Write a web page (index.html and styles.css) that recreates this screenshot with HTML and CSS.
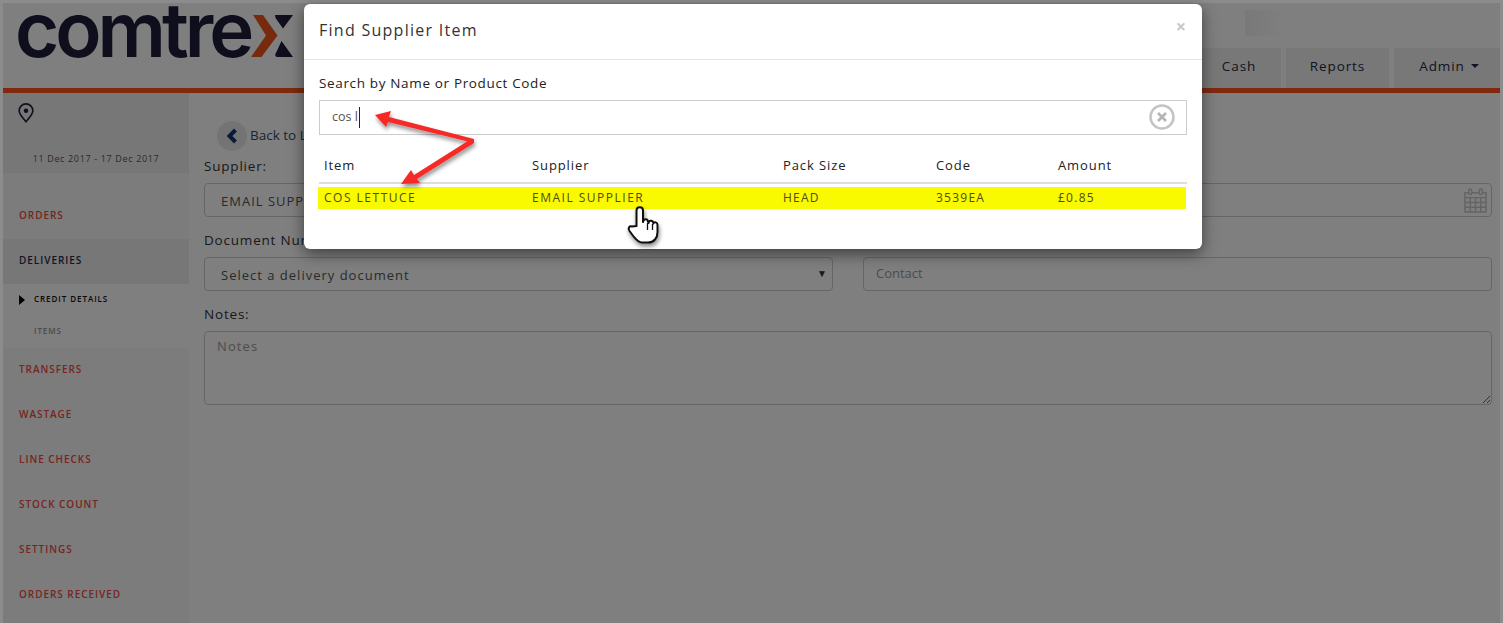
FILE: index.html
```html
<!DOCTYPE html>
<html lang="en">
<head>
<meta charset="utf-8">
<title>Find Supplier Item</title>
<link rel="stylesheet" href="styles.css">
</head>
<body>
<div class="frame">
  <header class="topbar">
    <div class="logo"><span class="logo-text">comtre</span><svg class="logo-x" viewBox="0 0 43 43" width="43" height="43"><path d="M2 0H12L26.500 20.500L10.500 42H0L15 20.500Z" fill="#f0541e"/><path d="M24 0H42L32 13.500L24.500 3ZM30.500 26L42 42H25.500L24 40Z" fill="#1e1c3a"/></svg></div>
    <div class="top-right">
      <div class="ghost"></div>
      <nav class="tabs">
        <a class="tab tab-cash">Cash</a>
        <a class="tab tab-reports">Reports</a>
        <a class="tab tab-admin">Admin <i class="caret"></i></a>
      </nav>
    </div>
  </header>
  <div class="layout">
    <aside class="sidebar">
      <div class="side-top">
        <svg class="pin" viewBox="0 0 18 22" width="18" height="20"><path d="M9 20.500C5 15.500 1.500 12.500 1.500 8.500A7.500 7.500 0 0 1 16.500 8.500C16.500 12.500 13 15.500 9 20.500Z" fill="none" stroke="#20203c" stroke-width="1.800"/><circle cx="9" cy="8.500" r="2.500" fill="#20203c"/></svg>
        <div class="dates">11 Dec 2017 - 17 Dec 2017</div>
      </div>
      <a class="side-link">ORDERS</a>
      <a class="side-link active">DELIVERIES</a>
      <div class="sub">
        <a class="sub-link current">CREDIT DETAILS</a>
        <a class="sub-link">ITEMS</a>
      </div>
      <a class="side-link">TRANSFERS</a>
      <a class="side-link">WASTAGE</a>
      <a class="side-link">LINE CHECKS</a>
      <a class="side-link">STOCK COUNT</a>
      <a class="side-link">SETTINGS</a>
      <a class="side-link">ORDERS RECEIVED</a>
    </aside>
    <main class="main">
      <div class="back"><span class="back-circle"><svg viewBox="0 0 14 16" width="14" height="16"><path d="M10.500 2L4.500 8L10.500 14" fill="none" stroke="#16376e" stroke-width="4"/></svg></span><span class="back-text">Back to List</span></div>
      <div class="grid">
        <div class="field">
          <label class="lbl">Supplier:</label>
          <div class="box value">EMAIL SUPPLIER</div>
        </div>
        <div class="field">
          <label class="lbl">&nbsp;</label>
          <div class="box date-box"><svg class="cal" viewBox="0 0 24 26" width="23" height="25"><g fill="none" stroke="#c8c8c8" stroke-width="1.500"><path d="M1 5H23V25H1ZM1 10H23M1 15H23M1 20H23M6.500 10V25M12 10V25M17.500 10V25"/><rect x="5" y="1" width="3" height="6" rx="1.500" fill="#fff"/><rect x="16" y="1" width="3" height="6" rx="1.500" fill="#fff"/></g></svg></div>
        </div>
        <div class="field">
          <label class="lbl">Document Number:</label>
          <div class="box value select-box"><span>Select a delivery document</span><span class="tri">▼</span></div>
        </div>
        <div class="field">
          <label class="lbl">&nbsp;</label>
          <input class="box contact" placeholder="Contact">
        </div>
      </div>
      <label class="lbl">Notes:</label>
      <textarea class="box notes" placeholder="Notes"></textarea>
    </main>
  </div>
</div>

<div class="overlay"></div>

<section class="modal">
  <div class="modal-head">
    <h4 class="modal-title">Find Supplier Item</h4>
    <span class="close">×</span>
  </div>
  <div class="modal-body">
    <label class="search-label">Search by Name or Product Code</label>
    <div class="search">
      <span class="search-text">cos l</span><i class="text-caret"></i>
      <svg class="clear" viewBox="0 0 26 26" width="26" height="26"><circle cx="13" cy="13" r="11.500" fill="none" stroke="#c4c4c4" stroke-width="2.500"/><path d="M9 9L17 17M17 9L9 17" stroke="#b4b4b4" stroke-width="2.600"/></svg>
    </div>
    <div class="row head-row">
      <span class="c1">Item</span><span class="c2">Supplier</span><span class="c3">Pack Size</span><span class="c4">Code</span><span class="c5">Amount</span>
    </div>
    <div class="row hit-row">
      <span class="c1">COS LETTUCE</span><span class="c2">EMAIL SUPPLIER</span><span class="c3">HEAD</span><span class="c4">3539EA</span><span class="c5">£0.85</span>
    </div>
  </div>
</section>

<svg class="annot" viewBox="0 0 1503 623" width="1503" height="623">
  <defs><filter id="sh" x="-20%" y="-20%" width="140%" height="150%"><feDropShadow dx="1" dy="3" stdDeviation="2" flood-color="#000" flood-opacity=".45"/></filter></defs>
  <g filter="url(#sh)">
    <path d="M375 115L391 111L389 117L474 139L474 143L388 122L386 127Z" fill="#f52a25"/>
    <path d="M401 184L411 170L414 175L471 139L474 143L417 179L420 183Z" fill="#f52a25"/>
  </g>
  <g filter="url(#sh)">
    <path d="M636.500 226L636.500 210.500C636.500 206 643 206 643 210.500L643 222C643.500 218.500 647.500 218.500 648 221.500L648.500 223C649 220 653 220 653.500 223.500C654 221.500 657.500 222 657.500 225L657.500 232C657.500 238 654 242.500 648 242.500L642 242.500C638.500 242.500 636.500 240 634 237L629.500 231C627.500 228 629.500 225.500 632 226.500Z" fill="#fff" stroke="#111" stroke-width="2" stroke-linejoin="round"/>
    <path d="M647.500 223V230M652.500 224V230" stroke="#111" stroke-width="1.300"/>
  </g>
</svg>
</body>
</html>
```

FILE: styles.css
```css
* { box-sizing: border-box; }
html, body { margin: 0; height: 100%; overflow: hidden; }
body {
  background: #8c8c8c;
  font-family: "Open Sans", sans-serif;
  color: #333;
  width: 1503px;
  height: 623px;
  position: relative;
}
.frame {
  width: 1503px;
  height: 623px;
  padding: 3px 3px 0 3px;
  display: flex;
  flex-direction: column;
  overflow: hidden;
}
.topbar {
  height: 90px;
  flex: none;
  display: flex;
  justify-content: space-between;
  background: #fff;
  border-bottom: 5px solid #fe541c;
  overflow: hidden;
}
.logo {
  display: flex;
  align-items: flex-start;
  padding-left: 12px;
  height: 85px;
}
.logo-text {
  font-family: Inter, sans-serif;
  font-weight: 600;
  font-size: 76px;
  line-height: 76px;
  letter-spacing: -4px;
  color: #1e1c3a;
  margin-top: -12px;
}
.logo-x { margin: 12px 0 0 1px; flex: none; }
.top-right { display: flex; flex-direction: column; align-items: flex-end; }
.ghost {
  width: 40px;
  height: 26px;
  margin: 7px 215px 12px 0;
  background: linear-gradient(90deg, #f2f2f2, #fff);
}
.tabs { display: flex; gap: 5px; height: 40px; }
.tab {
  display: flex;
  align-items: center;
  justify-content: center;
  background: #f0f0f0;
  color: #1e2a44;
  font-size: 13.500px;
  font-weight: 500;
  letter-spacing: .9px;
  padding-bottom: 4px;
}
.tab-cash { width: 84px; }
.tab-reports { width: 103px; }
.tab-admin { width: 106px; padding-left: 4px; }
.caret {
  width: 0;
  height: 0;
  margin-left: 6px;
  border-left: 4px solid transparent;
  border-right: 4px solid transparent;
  border-top: 4px solid #1e2a44;
}
.layout { display: flex; flex: 1; min-height: 0; }
.sidebar {
  width: 186px;
  flex: none;
  background: #f8f8f8;
  display: flex;
  flex-direction: column;
}
.side-top {
  height: 80px;
  background: #efefef;
  padding: 10px 14px 0;
}
.pin { display: block; }
.dates {
  margin: 30px -14px 0;
  text-align: center;
  font-size: 9px;
  font-weight: 500;
  letter-spacing: .65px;
  color: #555;
  line-height: 12px;
}
.side-link {
  height: 45px;
  flex: none;
  display: flex;
  align-items: center;
  padding: 0 0 3px 16px;
  font-size: 10px;
  font-weight: 600;
  letter-spacing: .95px;
  color: #f04c42;
}
.side-top + .side-link { margin-top: 21px; }
.side-link.active { background: #eeeeee; color: #1e2a50; }
.sub { background: #fefefe; height: 64px; display: flex; flex-direction: column; flex: none; }
.sub-link {
  height: 32px;
  display: flex;
  align-items: center;
  padding: 0 0 3px 31px;
  font-size: 8px;
  font-weight: 600;
  letter-spacing: .95px;
  color: #999;
  position: relative;
}
.sub-link.current { color: #111; }
.sub-link.current::before {
  content: "";
  position: absolute;
  left: 16px;
  top: 11px;
  border-left: 6px solid #000;
  border-top: 5px solid transparent;
  border-bottom: 5px solid transparent;
}
.main { flex: 1; padding: 28px 8px 0 15px; background: #fff; }
.back { display: flex; align-items: center; height: 30px; padding-left: 13px; }
.back-circle {
  width: 30px;
  height: 30px;
  border-radius: 50%;
  background: #e8e8e8;
  display: flex;
  align-items: center;
  justify-content: center;
}
.back-text { font-size: 13.500px; margin: 0 0 3px 3px; color: #3a4a66; }
.grid { display: grid; grid-template-columns: 629px 629px; column-gap: 30px; }
.lbl {
  display: block;
  font-size: 13.500px;
  font-weight: 500;
  letter-spacing: .8px;
  line-height: 18px;
  color: #333;
}
.field .lbl { margin-bottom: 8px; }
.grid .field:nth-child(1) { padding-top: 6px; }
.grid .field:nth-child(2) { padding-top: 6px; }
.grid .field:nth-child(3), .grid .field:nth-child(4) { padding-top: 14px; }
.box {
  display: block;
  width: 100%;
  border: 1px solid #ccc;
  border-radius: 4px;
  background: #fff;
  font-family: "Open Sans", sans-serif;
  height: 34px;
}
.value {
  display: flex;
  align-items: center;
  padding: 2px 16px 0;
  font-size: 13px;
  letter-spacing: 1px;
  color: #555;
}
.date-box { position: relative; }
.cal { position: absolute; right: 4px; top: 4px; }
.select-box { justify-content: space-between; padding-right: 4px; }
.tri { font-size: 10px; color: #333; letter-spacing: 0; margin: 0 1px 5px 0; }
.contact {
  padding: 0 12px 3px;
  font-size: 13px;
  outline: none;
}
.contact::placeholder, .notes::placeholder { color: #999; opacity: 1; }
main > .lbl { margin-top: 14px; margin-bottom: 8px; }
.notes {
  height: 74px;
  padding: 5px 12px;
  font-size: 13px;
  letter-spacing: 1.100px;
  outline: none;
  resize: vertical;
}
.overlay {
  position: absolute;
  inset: 3px 3px 0 3px;
  background: rgba(0, 0, 0, .5);
}
.modal {
  position: absolute;
  left: 304px;
  top: 4px;
  width: 898px;
  height: 245px;
  background: #fff;
  border-radius: 6px;
  box-shadow: 0 5px 15px rgba(0, 0, 0, .5);
}
.modal-head {
  height: 56px;
  border-bottom: 1px solid #e5e5e5;
  display: flex;
  justify-content: space-between;
  align-items: flex-start;
  padding: 0 15px;
}
.modal-title {
  margin: 15px 0 0;
  font-size: 16px;
  line-height: 22px;
  font-weight: 400;
  letter-spacing: 1.270px;
  color: #333;
}
.close {
  margin: 12px 1px 0 0;
  font-size: 18px;
  line-height: 20px;
  font-weight: 700;
  color: #c8c8c8;
}
.modal-body { padding: 13px 15px 0; }
.search-label {
  display: block;
  font-size: 13.500px;
  font-weight: 500;
  letter-spacing: .65px;
  line-height: 20px;
  color: #222;
}
.search {
  margin-top: 7px;
  height: 35px;
  border: 1px solid #ccc;
  display: flex;
  align-items: center;
  padding: 0 0 3px 12px;
  position: relative;
}
.search-text { font-size: 12.500px; color: #555; white-space: pre; }
.text-caret { width: 1px; height: 21px; background: #223; margin: 3px 0 0 1px; }
.clear { position: absolute; right: 11px; top: 3px; }
.row { display: flex; }
.row span { white-space: nowrap; }
.head-row {
  margin-top: 17px;
  height: 32px;
  padding-top: 3px;
  border-bottom: 2px solid #ddd;
  font-size: 13px;
  font-weight: 500;
  letter-spacing: .9px;
  color: #222;
  line-height: 20px;
}
.hit-row {
  margin: 3px 1px 0 -1px;
  height: 22px;
  padding-bottom: 2px;
  background: #f9f900;
  align-items: center;
  font-size: 12px;
  letter-spacing: 1.500px;
  color: #4e4e10;
}
.hit-row .c3, .hit-row .c4, .hit-row .c5 { letter-spacing: 1.250px; }
.c1 { width: 213px; padding-left: 5px; }
.hit-row .c1 { width: 214px; padding-left: 6px; }
.c2 { width: 251px; }
.c3 { width: 153px; }
.c4 { width: 122px; }
.annot { position: absolute; left: 0; top: 0; pointer-events: none; }
```
